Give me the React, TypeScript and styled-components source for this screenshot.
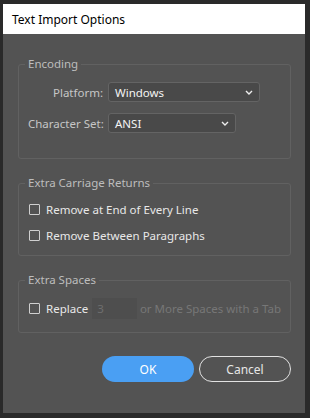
import React from "react";
import styled, { createGlobalStyle } from "styled-components";

const GlobalStyle = createGlobalStyle`
  html, body {
    margin: 0;
    padding: 0;
    background: #2a2a2a;
  }
  * {
    box-sizing: border-box;
  }
`;

const Frame = styled.div`
  width: 310px;
  height: 418px;
  padding: 4px 5px 5px 3px;
  background: #2a2a2a;
  font-family: "Noto Sans", "Open Sans", sans-serif;
  font-size: 11.5px;
`;

const Dialog = styled.div`
  width: 302px;
  height: 409px;
  display: flex;
  flex-direction: column;
  background: #535353;
`;

const TitleBar = styled.div`
  height: 30px;
  flex-shrink: 0;
  display: flex;
  align-items: center;
  padding-left: 9px;
  background: #ffffff;
  color: #000000;
  font-size: 12px;
`;

const Body = styled.div`
  flex: 1;
  display: flex;
  flex-direction: column;
  padding: 22px 14px 0 15px;
`;

const Group = styled.fieldset<{ $pt: number; $pb: number; $mb: number }>`
  margin: 0 0 ${(p) => p.$mb}px 0;
  padding: ${(p) => p.$pt}px 9px ${(p) => p.$pb}px 9px;
  border: 1px solid #616161;
  border-radius: 3px;
  min-width: 0;
`;

const Legend = styled.legend`
  margin-left: -3px;
  padding: 0 3px;
  line-height: 16px;
  color: #bdbdbd;
`;

const FieldRow = styled.div`
  display: flex;
  align-items: center;
  gap: 5px;
  height: 20px;
`;

const FieldStack = styled.div`
  display: flex;
  flex-direction: column;
  gap: 11px;
`;

const Label = styled.span`
  width: 75px;
  text-align: right;
  color: #c6c6c6;
  white-space: nowrap;
`;

const Select = styled.div<{ $w: number }>`
  width: ${(p) => p.$w}px;
  height: 20px;
  display: flex;
  align-items: center;
  justify-content: space-between;
  padding: 0 6px 0 6px;
  background: #494949;
  border: 1px solid #646464;
  border-radius: 3px;
  color: #f4f4f4;
`;

const Chevron = () => (
  <svg width="8" height="5" viewBox="0 0 8 5">
    <path d="M1 1 L4 4 L7 1" fill="none" stroke="#ededed" strokeWidth="1.4" />
  </svg>
);

const CheckList = styled.div`
  display: flex;
  flex-direction: column;
  gap: 6px;
`;

const CheckRow = styled.label`
  display: flex;
  align-items: center;
  height: 20px;
  gap: 6px;
  color: #e8e8e8;
  white-space: nowrap;
`;

const Box = styled.span`
  width: 11px;
  height: 11px;
  margin-left: 1px;
  border: 1px solid #cfcfcf;
  border-radius: 1px;
  flex-shrink: 0;
`;

const NumInput = styled.div`
  width: 46px;
  height: 21px;
  margin-left: -2px;
  display: flex;
  align-items: center;
  padding-left: 5px;
  background: #4e4e4e;
  color: #6f6f6f;
`;

const Muted = styled.span`
  margin-left: -3px;
  color: #777777;
`;

const Buttons = styled.div`
  display: flex;
  justify-content: flex-end;
  gap: 5px;
  margin-top: 23px;
`;

const Button = styled.button<{ $primary?: boolean }>`
  width: 92px;
  height: 26px;
  border-radius: 13px;
  font-family: inherit;
  font-size: 12px;
  cursor: pointer;
  background: ${(p) => (p.$primary ? "#4a9ff3" : "transparent")};
  color: ${(p) => (p.$primary ? "#ffffff" : "#e6e6e6")};
  border: ${(p) => (p.$primary ? "none" : "1.5px solid #e2e2e2")};
`;

export default function App() {
  return (
    <Frame>
      <GlobalStyle />
      <Dialog>
        <TitleBar>Text Import Options</TitleBar>
        <Body>
          <Group $pt={10} $pb={25} $mb={16}>
            <Legend>Encoding</Legend>
            <FieldStack>
              <FieldRow>
                <Label>Platform:</Label>
                <Select $w={152}>
                  Windows
                  <Chevron />
                </Select>
              </FieldRow>
              <FieldRow>
                <Label>Character Set:</Label>
                <Select $w={128}>
                  ANSI
                  <Chevron />
                </Select>
              </FieldRow>
            </FieldStack>
          </Group>

          <Group $pt={8} $pb={10} $mb={16}>
            <Legend>Extra Carriage Returns</Legend>
            <CheckList>
              <CheckRow>
                <Box />
                Remove at End of Every Line
              </CheckRow>
              <CheckRow>
                <Box />
                Remove Between Paragraphs
              </CheckRow>
            </CheckList>
          </Group>

          <Group $pt={10} $pb={14} $mb={0}>
            <Legend>Extra Spaces</Legend>
            <CheckRow>
              <Box />
              Replace
              <NumInput>3</NumInput>
              <Muted>or More Spaces with a Tab</Muted>
            </CheckRow>
          </Group>

          <Buttons>
            <Button $primary>OK</Button>
            <Button>Cancel</Button>
          </Buttons>
        </Body>
      </Dialog>
    </Frame>
  );
}
